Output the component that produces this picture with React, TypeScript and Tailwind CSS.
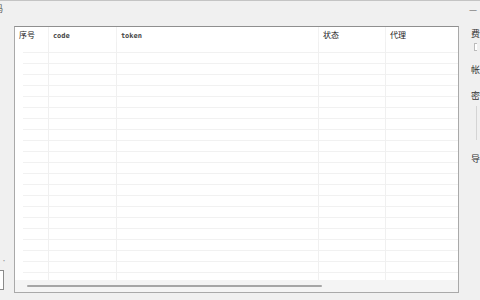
const cols = [
  { name: "序号", w: "w-[34px]" },
  { name: "code", w: "w-[68px]" },
  { name: "token", w: "w-[202px]" },
  { name: "状态", w: "w-[67px]" },
  { name: "代理", w: "flex-1" },
];

const rows = Array.from({ length: 21 });
const mono = { fontFamily: '"DejaVu Sans Mono", "Liberation Mono", monospace' };

export default function App() {
  return (
    <div
      className="w-[480px] h-[300px] bg-[#f0f0f0] overflow-hidden border-t border-[#c4c4c4] text-[#222]"
      style={{ fontFamily: '"Noto Sans CJK SC", "Liberation Sans", sans-serif' }}
    >
      {/* top strip */}
      <div className="h-[25px] flex justify-between">
        <span className="-ml-[6px] mt-[2px] text-[9px] leading-[12px] text-[#555]">码</span>
        <span className="mr-[3px] mt-[4px] text-[9px] leading-[10px] text-[#666]">—</span>
      </div>

      <div className="flex h-[274px]">
        {/* left clipped column */}
        <div className="w-[14px] flex flex-col justify-end pb-[10px]">
          <span className="text-[6px] leading-[6px] text-[#999] ml-[1px] mb-[6px]">·</span>
          <div className="w-[4px] h-[20px] bg-white border border-l-0 border-[#8a8a8a]" />
        </div>

        {/* table */}
        <div className="w-[448px] h-[267px] bg-white border border-[#a9a9a9] border-t-[#8f8f8f] flex flex-col">
          <div className="flex h-[15px] text-[8px] leading-[15px]">
            {cols.map((c, i) => (
              <div
                key={i}
                className={`${c.w} pl-[4px] ${i < 4 ? "border-r border-[#f2f2f2]" : ""}`}
              >
                {c.name === "code" || c.name === "token" ? (
                  <span className="text-[7px] font-bold text-[#444]" style={mono}>
                    {c.name}
                  </span>
                ) : (
                  c.name
                )}
              </div>
            ))}
          </div>
          <div className="flex-1 overflow-hidden flex">
            {cols.map((c, i) => (
              <div
                key={i}
                className={`${c.w} ${i === 0 ? "pl-[8px]" : ""} ${i < 4 ? "border-r border-[#f0f0f0]" : ""}`}
              >
                {rows.map((_, r) => (
                  <div key={r} className="h-[11px] border-b border-[#f1f1f1]" />
                ))}
              </div>
            ))}
          </div>
          <div className="h-[12px] bg-[#f4f4f4] flex items-center pl-[12px]">
            <div className="w-[295px] h-[2px] bg-[#a6a6a6] rounded-full" />
          </div>
        </div>

        {/* right panel */}
        <div className="flex-1 pl-[12px] flex flex-col text-[9px] leading-[10px] text-[#333]">
          <span className="mt-[3px]">费</span>
          <div className="mt-[4px] ml-[3px] w-[3px] h-[8px] bg-white border border-r-0 border-[#bbb]" />
          <span className="mt-[14px]">帐</span>
          <span className="mt-[16px]">密</span>
          <div className="mt-[5px] ml-[5px] w-[1px] h-[34px] border-l border-[#d4d4d4]" />
          <span className="mt-[14px]">导</span>
        </div>
      </div>
    </div>
  );
}
